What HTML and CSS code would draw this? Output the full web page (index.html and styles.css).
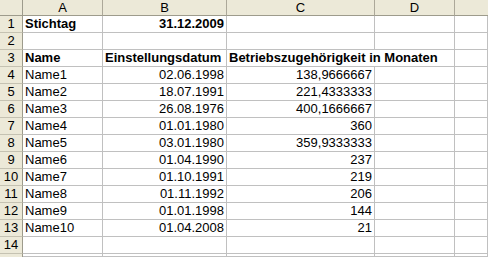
FILE: index.html
```html
<!DOCTYPE html>
<html>
<head>
<meta charset="utf-8">
<link rel="stylesheet" href="styles.css">
</head>
<body>
<div class="sheet">
  <div class="corner"></div><div class="ch">A</div><div class="ch">B</div><div class="ch">C</div><div class="ch">D</div><div class="ch last"></div>

  <div class="rh">1</div><div class="c b">Stichtag</div><div class="c b r">31.12.2009</div><div class="c"></div><div class="c"></div><div class="c"></div>
  <div class="rh">2</div><div class="c"></div><div class="c"></div><div class="c"></div><div class="c"></div><div class="c"></div>
  <div class="rh">3</div><div class="c b">Name</div><div class="c b">Einstellungsdatum</div><div class="c b over">Betriebszugehörigkeit in Monaten</div><div class="c"></div><div class="c"></div>
  <div class="rh">4</div><div class="c">Name1</div><div class="c r">02.06.1998</div><div class="c r">138,9666667</div><div class="c"></div><div class="c"></div>
  <div class="rh">5</div><div class="c">Name2</div><div class="c r">18.07.1991</div><div class="c r">221,4333333</div><div class="c"></div><div class="c"></div>
  <div class="rh">6</div><div class="c">Name3</div><div class="c r">26.08.1976</div><div class="c r">400,1666667</div><div class="c"></div><div class="c"></div>
  <div class="rh">7</div><div class="c">Name4</div><div class="c r">01.01.1980</div><div class="c r">360</div><div class="c"></div><div class="c"></div>
  <div class="rh">8</div><div class="c">Name5</div><div class="c r">03.01.1980</div><div class="c r">359,9333333</div><div class="c"></div><div class="c"></div>
  <div class="rh">9</div><div class="c">Name6</div><div class="c r">01.04.1990</div><div class="c r">237</div><div class="c"></div><div class="c"></div>
  <div class="rh">10</div><div class="c">Name7</div><div class="c r">01.10.1991</div><div class="c r">219</div><div class="c"></div><div class="c"></div>
  <div class="rh">11</div><div class="c">Name8</div><div class="c r">01.11.1992</div><div class="c r">206</div><div class="c"></div><div class="c"></div>
  <div class="rh">12</div><div class="c">Name9</div><div class="c r">01.01.1998</div><div class="c r">144</div><div class="c"></div><div class="c"></div>
  <div class="rh">13</div><div class="c">Name10</div><div class="c r">01.04.2008</div><div class="c r">21</div><div class="c"></div><div class="c"></div>
  <div class="rh">14</div><div class="c"></div><div class="c"></div><div class="c"></div><div class="c"></div><div class="c"></div>
  <div class="rh stub"></div><div class="c"></div><div class="c"></div><div class="c"></div><div class="c"></div><div class="c"></div>
</div>
</body>
</html>
```

FILE: styles.css
```css
html, body {
  margin: 0;
  padding: 0;
  background: #ffffff;
  overflow: hidden;
}
.sheet {
  display: grid;
  grid-template-columns: 23px 80px 124px 148px 80px 1fr;
  grid-template-rows: 16px repeat(14, 17px) 3px;
  width: 488px;
  font-family: "Liberation Sans", Arial, sans-serif;
  font-size: 13px;
  color: #000;
}
.corner, .ch, .rh {
  background: #ece9d8;
  box-sizing: border-box;
}
.corner {
  border-right: 1px solid #9d9b8c;
  border-bottom: 1px solid #9d9b8c;
}
.ch {
  border-right: 1px solid #aca899;
  border-bottom: 1px solid #9d9b8c;
  text-align: center;
  line-height: 15px;
}
.ch.last {
  border-right: none;
}
.rh {
  border-right: 1px solid #9d9b8c;
  border-bottom: 1px solid #c5c2b2;
  text-align: center;
  line-height: 16px;
}
.rh.stub {
  border-bottom: none;
}
.c {
  box-sizing: border-box;
  border-right: 1px solid #c0c0c0;
  border-bottom: 1px solid #c0c0c0;
  padding: 0 2px;
  line-height: 16px;
  white-space: nowrap;
  overflow: hidden;
}
.b {
  font-weight: bold;
}
.r {
  text-align: right;
}
.over {
  overflow: visible;
  border-right: none;
  position: relative;
  z-index: 1;
}
```
